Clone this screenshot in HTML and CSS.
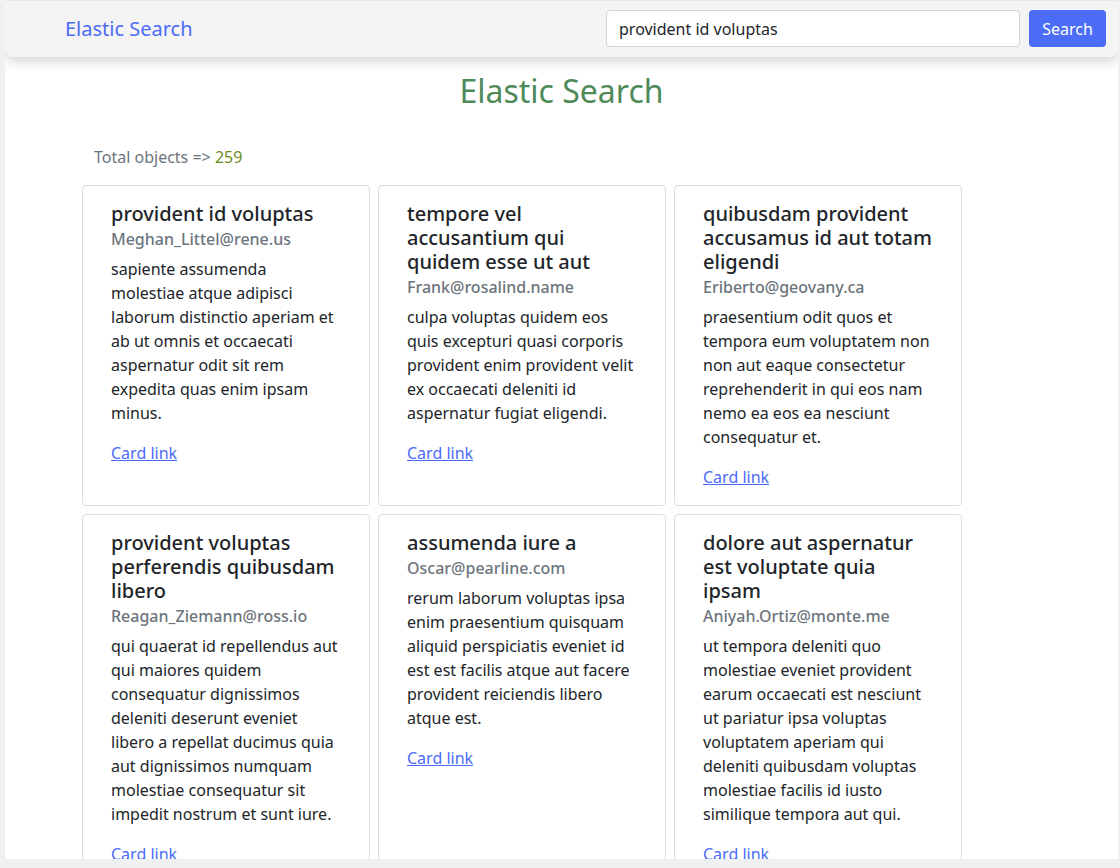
FILE: index.html
```html
<!DOCTYPE html>
<html>
<head>
<meta charset="utf-8">
<link rel="stylesheet" href="styles.css">
</head>
<body>
<div class="app">
  <nav class="navbar">
    <a class="brand">Elastic Search</a>
    <form class="search">
      <input class="search-input" type="text" value="provident id voluptas">
      <button class="search-btn" type="button">Search</button>
    </form>
  </nav>
  <main class="main">
    <h1 class="title">Elastic Search</h1>
    <p class="total">Total objects =&gt; <span class="count">259</span></p>
    <div class="grid">
      <div class="card">
        <h5 class="card-title">provident id voluptas</h5>
        <h6 class="card-subtitle">Meghan_Littel@rene.us</h6>
        <p class="card-text">sapiente assumenda molestiae atque adipisci laborum distinctio aperiam et ab ut omnis et occaecati aspernatur odit sit rem expedita quas enim ipsam minus.</p>
        <a class="card-link" href="#">Card link</a>
      </div>
      <div class="card">
        <h5 class="card-title">tempore vel accusantium qui quidem esse ut aut</h5>
        <h6 class="card-subtitle">Frank@rosalind.name</h6>
        <p class="card-text">culpa voluptas quidem eos quis excepturi quasi corporis provident enim provident velit ex occaecati deleniti id aspernatur fugiat eligendi.</p>
        <a class="card-link" href="#">Card link</a>
      </div>
      <div class="card">
        <h5 class="card-title">quibusdam provident accusamus id aut totam eligendi</h5>
        <h6 class="card-subtitle">Eriberto@geovany.ca</h6>
        <p class="card-text">praesentium odit quos et tempora eum voluptatem non non aut eaque consectetur reprehenderit in qui eos nam nemo ea eos ea nesciunt consequatur et.</p>
        <a class="card-link" href="#">Card link</a>
      </div>
      <div class="card">
        <h5 class="card-title">provident voluptas perferendis quibusdam libero</h5>
        <h6 class="card-subtitle">Reagan_Ziemann@ross.io</h6>
        <p class="card-text">qui quaerat id repellendus aut qui maiores quidem consequatur dignissimos deleniti deserunt eveniet libero a repellat ducimus quia aut dignissimos numquam molestiae consequatur sit impedit nostrum et sunt iure.</p>
        <a class="card-link" href="#">Card link</a>
      </div>
      <div class="card">
        <h5 class="card-title">assumenda iure a</h5>
        <h6 class="card-subtitle">Oscar@pearline.com</h6>
        <p class="card-text">rerum laborum voluptas ipsa enim praesentium quisquam aliquid perspiciatis eveniet id est est facilis atque aut facere provident reiciendis libero atque est.</p>
        <a class="card-link" href="#">Card link</a>
      </div>
      <div class="card">
        <h5 class="card-title">dolore aut aspernatur est voluptate quia ipsam</h5>
        <h6 class="card-subtitle">Aniyah.Ortiz@monte.me</h6>
        <p class="card-text">ut tempora deleniti quo molestiae eveniet provident earum occaecati est nesciunt ut pariatur ipsa voluptas voluptatem aperiam qui deleniti quibusdam voluptas molestiae facilis id iusto similique tempora aut qui.</p>
        <a class="card-link" href="#">Card link</a>
      </div>
    </div>
  </main>
</div>
</body>
</html>
```

FILE: styles.css
```css
* { box-sizing: border-box; }
html, body {
  margin: 0;
  padding: 0;
  background: #eef0f2;
  font-family: "Noto Sans", "Open Sans", sans-serif;
  color: #212529;
  font-size: 16px;
  line-height: 24px;
}
.app {
  margin: 0 2px 0 5px;
  height: 859px;
  background: #ffffff;
  overflow: hidden;
  border-top: 1px solid #e6e7e9;
}
.navbar {
  height: 56px;
  background: #f4f4f4;
  border-radius: 0 0 8px 8px;
  box-shadow: 0 5px 12px rgba(0, 0, 0, 0.16);
  display: flex;
  align-items: center;
  justify-content: space-between;
  padding: 0 12px 0 60px;
  position: relative;
}
.brand {
  font-size: 20px;
  line-height: 30px;
  color: #4a6cf7;
  text-decoration: none;
  margin-top: -1px;
}
.search {
  display: flex;
  gap: 9px;
  margin: 0;
  margin-top: -1px;
}
.search-input {
  width: 414px;
  height: 37px;
  border: 1px solid #d3d5da;
  border-radius: 4px;
  padding: 1px 12px 0;
  font-family: inherit;
  font-size: 16px;
  color: #212529;
  background: #fff;
  outline: none;
}
.search-btn {
  width: 77px;
  height: 37px;
  border: none;
  border-radius: 4px;
  background: #4a6cf7;
  color: #fff;
  font-family: inherit;
  font-size: 16px;
  padding: 1px 0 0;
}
.main {
  padding: 0 0 0 77px;
}
.title {
  margin: 15px 0 0;
  text-align: center;
  font-size: 32px;
  line-height: 38px;
  font-weight: 400;
  color: #4e8a5a;
  padding-right: 77px;
}
.total {
  margin: 35px 0 0;
  padding-left: 12px;
  color: #6c757d;
  line-height: 24px;
}
.count {
  color: #6b8e23;
}
.grid {
  margin-top: 16px;
  display: grid;
  grid-template-columns: repeat(3, 288px);
  gap: 8px;
}
.card {
  border: 1px solid #dcdcdc;
  border-radius: 4px;
  padding: 16px 28px 16px 28px;
  background: #fff;
}
.card-title {
  margin: 0 0 1px;
  font-size: 20px;
  line-height: 24px;
  font-weight: 500;
  color: #212529;
}
.card-subtitle {
  margin: 0 0 6px;
  font-size: 16px;
  line-height: 24px;
  font-weight: 500;
  color: #6c757d;
}
.card-text {
  margin: 0 0 16px;
  line-height: 24px;
}
.card-link {
  color: #4a6cf7;
  text-decoration: underline;
}
```
